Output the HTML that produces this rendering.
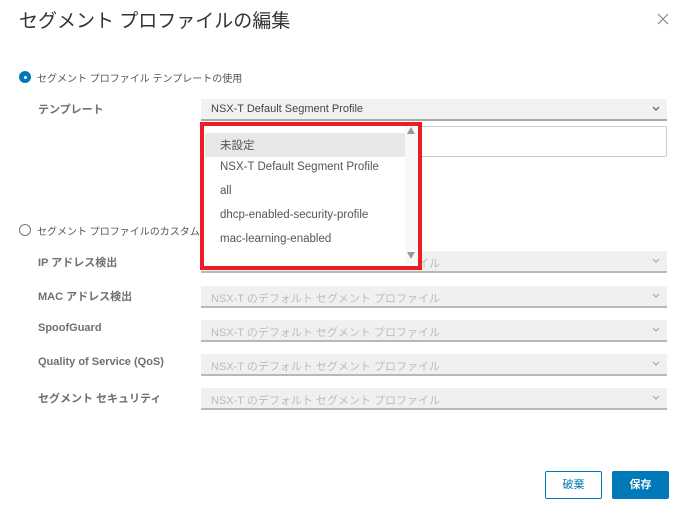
<!DOCTYPE html>
<html><head><meta charset="utf-8"><style>
*{box-sizing:border-box;margin:0;padding:0}
body{width:681px;height:513px;background:#fff;position:relative;overflow:hidden;font-family:"Liberation Sans","Noto Sans CJK JP",sans-serif;color:#565656}
.a{position:absolute;white-space:nowrap}
.title{left:19px;top:6px;font-size:19px;color:#333}
.lbl{font-size:11px;font-weight:bold;color:#707070;left:38px}
.sel{position:absolute;left:201px;width:466px;height:22px;background:#f2f2f2;border-bottom:2px solid #a9a9a9;font-size:11px;padding:4px 10px;color:#555}
.sel.dis{color:#bcbcbc;background:#f0f0f0;border-bottom-color:#b8b8b8}
.chev{position:absolute;right:7px;top:7px}
.item{position:absolute;left:220px;font-size:11.5px;color:#555}
.btn{position:absolute;top:471px;height:28px;width:57px;font-size:11px;text-align:center;line-height:26px;border-radius:2px}
</style></head><body>
<div class="a title">セグメント プロファイルの編集</div>
<svg class="a" style="left:657px;top:13px" width="12" height="12"><path d="M1 1L11 11M11 1L1 11" stroke="#888" stroke-width="1.2"/></svg>

<div class="a" style="left:19px;top:71px;width:12px;height:12px;border-radius:50%;background:#0079b8"></div>
<div class="a" style="left:23.5px;top:75.5px;width:3px;height:3px;border-radius:50%;background:#fff"></div>
<div class="a" style="left:37px;top:70px;font-size:10px;color:#555">セグメント プロファイル テンプレートの使用</div>
<div class="a lbl" style="top:101px">テンプレート</div>
<div class="sel" style="top:99px;color:#444">NSX-T Default Segment Profile<svg class="chev" width="8" height="6"><path d="M1 1L4 4L7 1" stroke="#555" fill="none" stroke-width="1.2"/></svg></div>
<div class="a" style="left:201px;top:126px;width:466px;height:31px;border:1px solid #ccc;border-radius:2px"></div>

<div class="a" style="left:19px;top:224px;width:12px;height:12px;border-radius:50%;border:1px solid #777"></div>
<div class="a" style="left:37px;top:223px;font-size:10px;color:#555">セグメント プロファイルのカスタム</div>

<div class="a lbl" style="top:254px">IP アドレス検出</div>
<div class="sel dis" style="top:251px">NSX-T のデフォルト セグメント プロファイル<svg class="chev" width="8" height="6"><path d="M1 1L4 4L7 1" stroke="#aaa" fill="none" stroke-width="1.2"/></svg></div>
<div class="a lbl" style="top:288px">MAC アドレス検出</div>
<div class="sel dis" style="top:286px">NSX-T のデフォルト セグメント プロファイル<svg class="chev" width="8" height="6"><path d="M1 1L4 4L7 1" stroke="#aaa" fill="none" stroke-width="1.2"/></svg></div>
<div class="a lbl" style="top:322px">SpoofGuard</div>
<div class="sel dis" style="top:320px">NSX-T のデフォルト セグメント プロファイル<svg class="chev" width="8" height="6"><path d="M1 1L4 4L7 1" stroke="#aaa" fill="none" stroke-width="1.2"/></svg></div>
<div class="a lbl" style="top:356px">Quality of Service (QoS)</div>
<div class="sel dis" style="top:354px">NSX-T のデフォルト セグメント プロファイル<svg class="chev" width="8" height="6"><path d="M1 1L4 4L7 1" stroke="#aaa" fill="none" stroke-width="1.2"/></svg></div>
<div class="a lbl" style="top:390px">セグメント セキュリティ</div>
<div class="sel dis" style="top:388px">NSX-T のデフォルト セグメント プロファイル<svg class="chev" width="8" height="6"><path d="M1 1L4 4L7 1" stroke="#aaa" fill="none" stroke-width="1.2"/></svg></div>

<div class="a" style="left:200px;top:122px;width:222px;height:148px;border:4px solid #ee1c25;background:#fff"></div>
<div class="a" style="left:205px;top:133px;width:200px;height:24px;background:#e8e8e8"></div>
<div class="a" style="left:405px;top:126px;width:13px;height:138px;background:#f8f8f8"></div>
<div class="a" style="left:407px;top:127px;width:0;height:0;border-left:4px solid transparent;border-right:4px solid transparent;border-bottom:7px solid #999"></div>
<div class="a" style="left:407px;top:252px;width:0;height:0;border-left:4px solid transparent;border-right:4px solid transparent;border-top:7px solid #999"></div>
<div class="item" style="top:137px">未設定</div>
<div class="item" style="top:161px">NSX-T Default Segment Profile</div>
<div class="item" style="top:185px">all</div>
<div class="item" style="top:209px">dhcp-enabled-security-profile</div>
<div class="item" style="top:233px">mac-learning-enabled</div>

<div class="btn" style="left:545px;border:1px solid #0079b8;color:#0079b8;background:#fff">破棄</div>
<div class="btn" style="left:612px;background:#0079b8;color:#fff;font-weight:bold;line-height:28px">保存</div>
</body></html>
